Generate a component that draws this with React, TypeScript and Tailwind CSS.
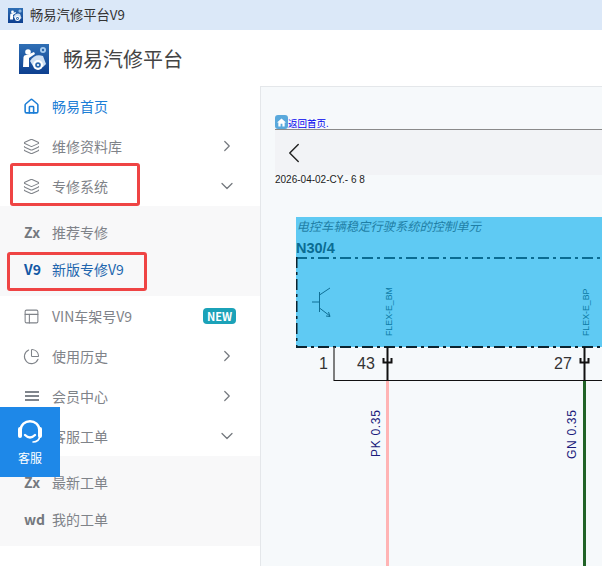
import { Home, Layers, PanelsTopLeft, PieChart, ChevronRight, ChevronDown, ChevronLeft } from "lucide-react";
import type { ReactNode } from "react";

const FONT = "font-['Microsoft_YaHei','Noto_Sans_CJK_SC','Liberation_Sans',sans-serif]";

function Logo({ size }: { size: number }) {
  return (
    <svg width={size} height={size} viewBox="0 0 30 30" className="shrink-0">
      <defs>
        <linearGradient id={`lg${size}`} x1="0" y1="0" x2="0" y2="1">
          <stop offset="0" stopColor="#2f6fb5" />
          <stop offset="1" stopColor="#0d3f8f" />
        </linearGradient>
      </defs>
      <rect width="30" height="30" fill={`url(#lg${size})`} />
      <circle cx="9" cy="8" r="2.8" fill="#fff" />
      <path d="M4 23 L4.5 13 Q5 10.5 8 11 L15 8 L16 10 L10 14 L10 23 Z" fill="#fff" />
      <path d="M11 17 Q16 9 24 12 L27 20 L24 23 L14 22 Z" fill="#cfe0f3" />
      <circle cx="19" cy="21" r="5" fill="#fff" />
      <circle cx="19" cy="21" r="2.8" fill="#2a68ae" />
      <circle cx="19" cy="21" r="1.1" fill="#fff" />
      <circle cx="24" cy="6" r="3" fill="#a9cdf0" />
      <circle cx="24" cy="6" r="1.2" fill="#2a68ae" />
    </svg>
  );
}

function BarsIcon() {
  return (
    <svg width="14" height="10" viewBox="0 0 14 10" fill="#80858c">
      <rect y="0" width="14" height="2" />
      <rect y="4" width="14" height="2" />
      <rect y="8" width="14" height="2" />
    </svg>
  );
}

function Row({ icon, label, arrow, active, badge, tight }: { icon: ReactNode; label: string; arrow?: "right" | "down"; active?: boolean; badge?: boolean; tight?: boolean }) {
  return (
    <div className={`flex h-10 items-center ${active ? "text-[#1c7ed6]" : "text-[#7f8389]"}`}>
      <span className={`flex w-[52px] shrink-0 ${tight ? "pl-[25px]" : "pl-[23px]"}`}>{icon}</span>
      <span className="flex-1 text-sm">{label}</span>
      {arrow === "right" && <ChevronRight size={18} strokeWidth={1.6} className="mr-6 text-[#74787e]" />}
      {arrow === "down" && <ChevronDown size={20} strokeWidth={1.5} className="mr-[23px] text-[#74787e]" />}
      {badge && (
        <span className="mr-6 flex h-4 w-[33px] items-center justify-center rounded-[4px] bg-[#1ba2b8] text-[11px] font-bold text-white">NEW</span>
      )}
    </div>
  );
}

function SubRow({ tag, label, active }: { tag: string; label: string; active?: boolean }) {
  return (
    <div className={`flex h-[37px] items-center ${active ? "text-[#2266ae]" : "text-[#7f8389]"}`}>
      <span className={`w-[52px] shrink-0 pl-6 text-sm font-bold ${active ? "text-[#1458a5]" : "text-[#74787e]"}`}>{tag}</span>
      <span className="text-sm">{label}</span>
    </div>
  );
}

function Diagram() {
  const sans = "'Liberation Sans', sans-serif";
  return (
    <svg width="327" height="350" viewBox="296 216 327 350" className="block shrink-0">
      <rect x="296" y="217" width="327" height="130" fill="#5fcaf3" />
      <text x="296.5" y="231" fontSize="12.3" fontStyle="italic" fill="#1f7fa6" fontFamily="'Noto Sans CJK SC', sans-serif">电控车辆稳定行驶系统的控制单元</text>
      <text x="296" y="253" fontSize="14.5" fontWeight="700" fill="#0a6c92" fontFamily={sans}>N30/4</text>
      <line x1="296" y1="258" x2="623" y2="258" stroke="#0a6c92" strokeWidth="2" strokeDasharray="11 4 3 4" />
      <line x1="296.5" y1="257" x2="296.5" y2="347" stroke="#0b2430" strokeWidth="2" strokeDasharray="11 4 3 4" />
      <line x1="296" y1="347" x2="623" y2="347" stroke="#0b2430" strokeWidth="2" strokeDasharray="11 4 3 4" />

      <g stroke="#0f6f96" strokeWidth="1" fill="none">
        <line x1="312" y1="302" x2="319" y2="302" />
        <line x1="319.5" y1="292" x2="319.5" y2="312" />
        <line x1="319.5" y1="295" x2="330" y2="288" />
        <line x1="319.5" y1="308" x2="330" y2="316" />
        <path d="M326 316 L330 316.5 L328.5 312" />
      </g>

      <text transform="translate(392 336) rotate(-90)" fontSize="8.8" fill="#0d7ba6" fontFamily={sans}>FLEX-E_BM</text>
      <text transform="translate(589 336) rotate(-90)" fontSize="8.8" fill="#0d7ba6" fontFamily={sans}>FLEX-E_BP</text>

      <text x="319" y="369" fontSize="16" fill="#333" fontFamily={sans}>1</text>
      <text x="357" y="369" fontSize="16" fill="#333" fontFamily={sans}>43</text>
      <text x="554" y="369" fontSize="16" fill="#333" fontFamily={sans}>27</text>

      <line x1="334" y1="347" x2="334" y2="381" stroke="#555" strokeWidth="1.5" />
      <line x1="334" y1="380.5" x2="623" y2="380.5" stroke="#111" strokeWidth="1" />

      <rect x="386" y="381" width="3" height="185" fill="#ffb4b4" />
      <rect x="583" y="381" width="3" height="185" fill="#216327" />

      <g stroke="#111" fill="none">
        <line x1="387.5" y1="347" x2="387.5" y2="381" strokeWidth="2" />
        <path d="M383.5 358 V362.5 H391.5 V358" strokeWidth="2" />
        <line x1="584.5" y1="347" x2="584.5" y2="381" strokeWidth="2" />
        <path d="M580.5 358 V362.5 H588.5 V358" strokeWidth="2" />
      </g>

      <text transform="translate(380 457) rotate(-90)" fontSize="12" letterSpacing="0.7" fill="#1c1c7c" fontFamily={sans}>PK 0.35</text>
      <text transform="translate(576 459) rotate(-90)" fontSize="12" letterSpacing="0.7" fill="#1c1c7c" fontFamily={sans}>GN 0.35</text>
    </svg>
  );
}

export default function App() {
  return (
    <div className={`relative flex h-[566px] w-[602px] flex-col overflow-hidden bg-white ${FONT}`}>
      <div className="flex h-[30px] shrink-0 items-center bg-[#dbe8f8] pl-2">
        <Logo size={15} />
        <span className="ml-[7px] text-[13.3px] text-[#333]">畅易汽修平台V9</span>
      </div>
      <div className="flex min-h-0 flex-1">
        <aside className="flex w-[260px] shrink-0 flex-col">
          <div className="flex h-[56px] shrink-0 items-center pl-[19px] pt-[2px]">
            <Logo size={30} />
            <span className="ml-[14px] text-xl text-[#444]">畅易汽修平台</span>
          </div>
          <Row active icon={<Home size={17} strokeWidth={2.2} />} label="畅易首页" />
          <Row icon={<Layers size={17} strokeWidth={1.5} />} label="维修资料库" arrow="right" />
          <Row icon={<Layers size={17} strokeWidth={1.5} />} label="专修系统" arrow="down" />
          <div className="bg-[#f8f8f9] pb-[9px] pt-[7px]">
            <SubRow tag="Zx" label="推荐专修" />
            <SubRow tag="V9" label="新版专修V9" active />
          </div>
          <Row icon={<PanelsTopLeft size={17} strokeWidth={1.5} />} label="VIN车架号V9" badge />
          <Row icon={<PieChart size={17} strokeWidth={1.5} />} label="使用历史" arrow="right" />
          <Row tight icon={<BarsIcon />} label="会员中心" arrow="right" />
          <Row tight icon={<BarsIcon />} label="客服工单" arrow="down" />
          <div className="bg-[#f8f8f9] pb-[9px] pt-[7px]">
            <SubRow tag="Zx" label="最新工单" />
            <SubRow tag="wd" label="我的工单" />
          </div>
        </aside>
        <div className="flex min-w-0 flex-1 flex-col pt-[56px]">
          <main className="flex min-h-0 flex-1 flex-col overflow-hidden border-l border-t border-[#e4e7ea] bg-[#f6f9fb]">
            <div className="ml-[14px] mt-[28px] flex h-[14px] shrink-0 items-end">
              <span className="flex h-[14px] w-[13px] items-center justify-center rounded-[3px] bg-[#5aa9dc]">
                <svg width="9" height="9" viewBox="0 0 10 10" fill="#fff"><path d="M5 0.5 L10 5 H8.5 V9.5 H6 V6.5 H4 V9.5 H1.5 V5 H0 Z" /></svg>
              </span>
              <span className="text-[9.5px] leading-[12px] text-[#0000ee]">返回首页.</span>
            </div>
            <div className="ml-[14px] h-[46px] shrink-0 border-t border-[#8a8a8a] bg-[#f2f3f6] pl-[2px] pt-[6px]">
              <ChevronLeft size={34} strokeWidth={1} className="text-[#222]" />
            </div>
            <div className="ml-[14px] mt-[-1px] h-[12px] shrink-0 font-['Liberation_Sans',sans-serif] text-[10px] leading-[12px] text-[#222]">2026-04-02-CY.- 6 8</div>
            <div className="ml-[35px] mt-[30px] shrink-0">
              <Diagram />
            </div>
          </main>
        </div>
      </div>

      <div className="absolute left-[10px] top-[163px] h-[43px] w-[130px] rounded-[3px] border-[3px] border-[#ef4444]" />
      <div className="absolute left-[7px] top-[252px] h-[39px] w-[140px] rounded-[3px] border-[3px] border-[#ef4444]" />

      <div className="absolute left-0 top-[407px] flex h-[70px] w-[60px] flex-col items-center bg-[#1e88e8] pt-[10px] text-white">
        <svg width="30" height="30" viewBox="0 0 30 30" fill="none" stroke="#fff" strokeLinecap="round">
          <path d="M5.5 14 C5.5 1 24.5 1 24.5 14 V18" strokeWidth="2.4" />
          <path d="M5 12 V19" strokeWidth="4" />
          <path d="M25 12 V19" strokeWidth="4" />
          <path d="M10 18 Q15 23 20 18" strokeWidth="2.4" />
          <path d="M25 19 Q24 25 18 25" strokeWidth="1.6" />
        </svg>
        <span className="mt-[3px] text-xs leading-[16px]">客服</span>
      </div>
    </div>
  );
}
